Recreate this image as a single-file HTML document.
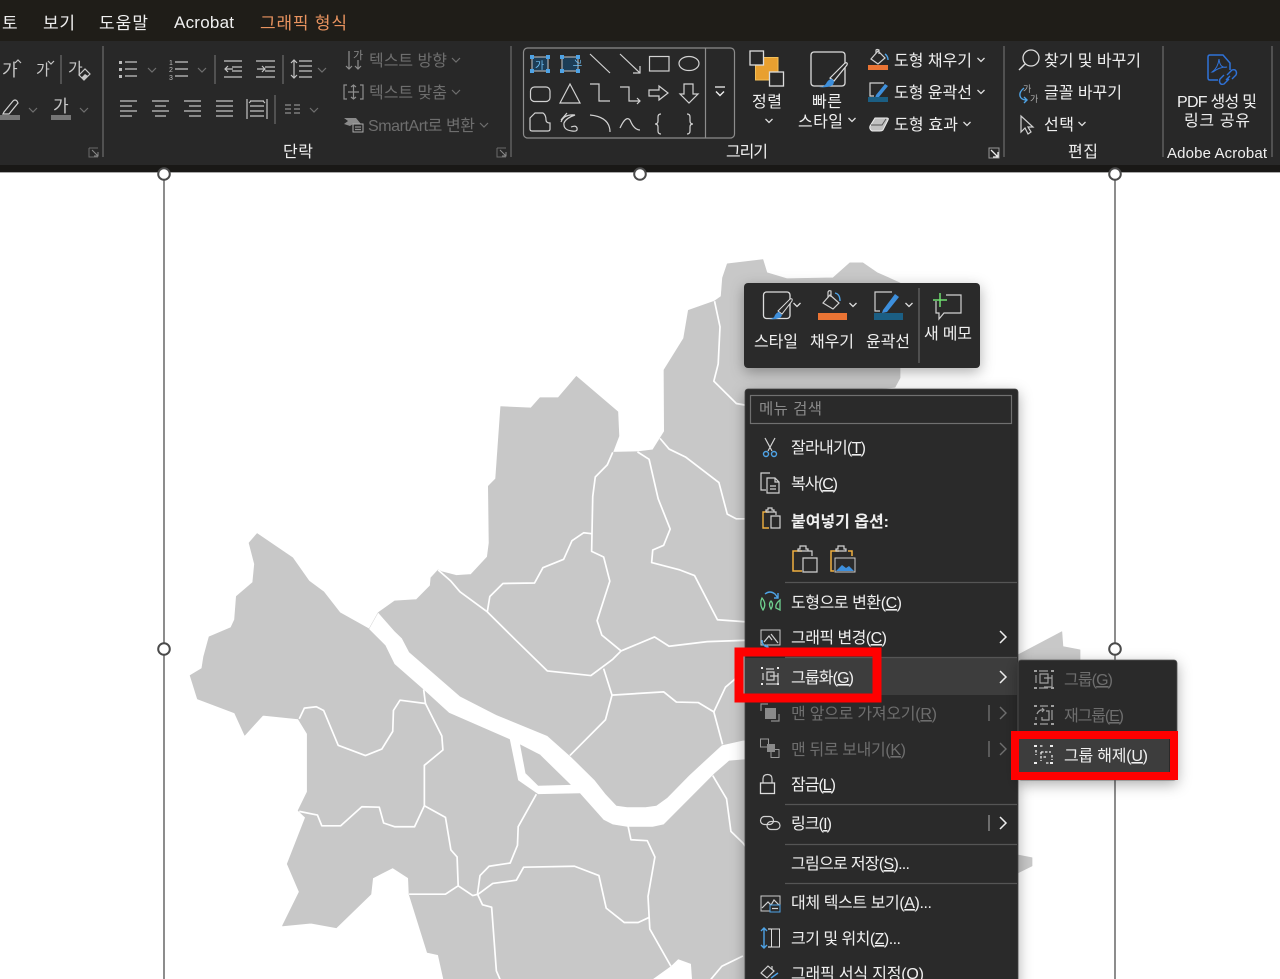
<!DOCTYPE html>
<html lang="ko"><head><meta charset="utf-8"><title>그래픽 형식</title>
<style>
html,body{margin:0;padding:0;background:#fff;width:1280px;height:979px;overflow:hidden}
svg{display:block}
text{font-family:"Liberation Sans","Noto Sans CJK KR",sans-serif;font-size:16px;fill:#f0f0f0}
.d{fill:#6b6b6b}.m{font-size:16px;fill:#f0f0f0}.g{font-size:16px;fill:#6e6e6e}
.s{fill:none;stroke:#d2d2d2;stroke-width:1.2}
.t{fill:none;stroke:#c4c4c4;stroke-width:1.2}
.dim{fill:none;stroke:#6f6f6f;stroke-width:1.2}
.mid{fill:none;stroke:#8f8f8f;stroke-width:1.2}
.b{fill:none;stroke:#4ea3e6;stroke-width:1.4}
.sep{stroke:#5f5f5f;stroke-width:1.5}
.ln{fill:none;stroke:#fff;stroke-width:1.7;vector-effect:non-scaling-stroke;stroke-linejoin:round}
</style></head><body>
<svg width="1280" height="979" viewBox="0 0 1280 979" xmlns="http://www.w3.org/2000/svg">
<defs>
<filter id="sh" x="-20%" y="-20%" width="140%" height="140%"><feDropShadow dx="0" dy="4" stdDeviation="7" flood-color="#000" flood-opacity=".32"/></filter>
<polyline id="c" points="-3.5,-2 0,1.5 3.5,-2" fill="none" stroke="#ddd" stroke-width="1.3"/>
<polyline id="cd" points="-4,-2 0,2 4,-2" fill="none" stroke="#6f6f6f" stroke-width="1.2"/>
<g id="la"><path d="M0 0h9M0 0v9h9" fill="none" stroke="#6a6a6a"/><path d="M3 2l6 6M9 4v4H5" fill="none" stroke="#8a8a8a"/></g>
</defs>

<!-- frame lines -->
<rect width="1280" height="979" fill="#fff"/>
<path d="M164 173V979M1115 173V979" stroke="#5c5c5c" stroke-width="1.4"/>

<!-- map -->
<g transform="translate(180,250) scale(.36364,.46510)">
<polygon fill="#c8c8c8" stroke="#c8c8c8" stroke-width="2" stroke-linejoin="round" points="28,915 60,900 65,875 80,832 140,812 150,795 155,745 200,715 205,675 190,630 212,610 310,662 355,712 395,735 440,780 520,815 545,780 590,755 650,752 688,722 690,705 710,688 720,692 760,700 800,698 845,660 850,630 848,508 868,492 882,337 965,340 990,318 1040,318 1090,272 1204,348 1207,400 1190,435 1258,434 1300,430 1320,405 1332,390 1331,258 1385,190 1398,130 1470,110 1488,100 1492,60 1505,30 1603,21 1614,49 1669,62 1796,60 1842,28 1878,28 1917,49 1980,71 1980,275 1966,295 1900,300 1900,800 2304,871 2425,821 2428,853 2475,860 2475,967 2200,1000 2304,1301 2343,1307 2343,1324 2304,1339 2200,1568 725,1568 710,1515 680,1510 630,1385 628,1350 585,1328 530,1350 525,1385 430,1457 360,1447 282,1453 328,1380 295,1320 345,1220 325,1205 350,1165 350,1040 325,1008 228,1000 178,1043 150,995 48,965"/>
<polygon fill="#fff" points="545,780 590,820 610,835 630,865 770,960 870,1000 1010,1045 1075,1090 1140,1140 1170,1170 1200,1195 1230,1198 1280,1198 1310,1195 1340,1178 1400,1130 1490,1065 1548,1055 1600,1052 1600,1092 1510,1098 1470,1125 1330,1235 1300,1240 1230,1240 1190,1235 1165,1225 1100,1168 985,1170 930,1140 907,1052 740,995 670,945 590,890 565,850 520,815"/>
<polygon fill="#c8c8c8" points="935,1063 990,1085 1075,1150 985,1152 950,1125"/>
<polygon fill="#fff" points="1300,1568 1350,1540 1370,1525 1405,1535 1408,1568"/>
<polyline class="ln" points="710,688 745,712 770,735 845,778 925,840 1010,905 1130,915 1190,880 1213,862"/>
<polyline class="ln" points="845,778 852,745 888,717 975,716 998,683 1055,665 1078,625 1110,608 1132,610"/>
<polyline class="ln" points="1190,435 1175,462 1142,488 1135,530 1132,648 1165,660 1182,712 1147,797 1160,828 1213,862"/>
<polyline class="ln" points="1213,862 1305,832 1345,852 1450,842 1600,838"/>
<polyline class="ln" points="1258,434 1290,450 1315,535 1348,600 1330,635 1300,645 1297,672 1375,688 1415,700 1478,795 1600,802"/>
<polyline class="ln" points="1320,405 1345,428 1390,445 1482,500 1505,568 1530,578 1600,578"/>
<polyline class="ln" points="1470,110 1485,165 1480,245 1468,282 1530,330 1600,340"/>
<polyline class="ln" points="1165,900 1188,957 1170,1010 1072,1087"/>
<polyline class="ln" points="1188,957 1330,950 1365,972 1425,973 1468,993 1500,940 1530,920"/>
<polyline class="ln" points="1468,993 1492,1063"/>
<polyline class="ln" points="670,945 675,975 605,968 587,990 585,1035 555,1073 510,1087 435,1065 395,990 375,982 342,985 328,1008"/>
<polyline class="ln" points="675,975 720,1045 723,1075 672,1108 672,1195 645,1240 590,1240 560,1232 548,1198 500,1197 442,1238 390,1238 378,1215 328,1207"/>
<polyline class="ln" points="672,1195 730,1220 745,1290 762,1305 765,1367 730,1385 630,1385"/>
<polyline class="ln" points="765,1367 805,1388 820,1385 860,1362 925,1355 945,1327 1085,1325 1152,1345 1172,1415 1222,1446 1260,1446 1290,1435"/>
<polyline class="ln" points="818,1385 825,1345 850,1325 908,1318 928,1280 930,1240 980,1170"/>
<polyline class="ln" points="818,1385 832,1408 857,1413 870,1550 880,1568"/>
<polyline class="ln" points="1232,1238 1240,1268 1285,1270 1306,1305 1287,1390 1292,1460 1350,1540"/>
<polyline class="ln" points="1465,1130 1503,1180 1515,1250 1548,1275 1600,1330"/>
<polyline class="ln" points="1460,1568 1490,1540 1548,1518"/>
</g>

<!-- title + ribbon -->
<rect width="1280" height="41" fill="#1f1d18"/>
<rect y="41" width="1280" height="124" fill="#282828"/>
<rect y="165" width="1280" height="7" fill="#191816"/>
<rect y="172" width="1280" height="1" fill="#aaa"/>
<text x="2" y="29" style="font-size:17px">토</text>
<text x="43" y="29" style="font-size:17px" textLength="32">보기</text>
<text x="99" y="29" style="font-size:17px" textLength="49">도움말</text>
<text x="174" y="28" style="font-size:17px" textLength="60">Acrobat</text>
<text x="260" y="29" style="font-size:17px;fill:#e8935f" textLength="87">그래픽 형식</text>

<!-- handles -->
<g fill="#fff" stroke="#4a4a4a" stroke-width="2">
<circle cx="164" cy="174" r="5.800"/><circle cx="640" cy="174" r="5.800"/><circle cx="1115" cy="174" r="5.800"/>
<circle cx="164" cy="649" r="5.800"/><circle cx="1115" cy="649" r="5.800"/>
</g>

<!-- group separators -->
<path class="sep" d="M103 46V157M511 46V157M1004 46V157M1163 46V157M1272 46V157"/>
<path class="sep" d="M61 55V84M215 55V84M283 55V84M275 95V124"/>
<use href="#la" x="89" y="148"/><use href="#la" x="497" y="148"/>
<g><path d="M989 148h10v10h-10z" fill="none" stroke="#999"/><path d="M991 150l7 7M998 152v5h-5" fill="none" stroke="#eee" stroke-width="1.3"/></g>

<!-- font cluster -->
<text x="2" y="76" style="font-size:17px;fill:#c8c8c8">가</text><path class="t" d="M15 63l3-3 3 3"/>
<text x="36" y="75" style="font-size:15px;fill:#c8c8c8">가</text><path class="t" d="M48 61l3 3 3-3"/>
<text x="68" y="74" style="font-size:16px;fill:#c8c8c8">가</text>
<path d="M79 75l6-6 5 5-6 6z" fill="none" stroke="#c8c8c8" stroke-width="1.200"/><path d="M81.500 77.500l3.500-3.500 3 2-3.500 3.500z" fill="#c8c8c8"/>
<path class="s" d="M4 112l9-11q2-2 4 0l1 2-9 11H3z"/><rect y="115" width="20" height="5" fill="#767676"/><use href="#cd" x="33" y="110"/>
<text x="53" y="112" style="font-size:17px;fill:#c8c8c8">가</text><rect x="51" y="115" width="20" height="5" fill="#767676"/><use href="#cd" x="84" y="110"/>

<!-- paragraph -->
<g class="t">
<path d="M125 62h12M125 69h12M125 76h12"/>
<path d="M175 62h13M175 69h13M175 76h13"/>
<path d="M224 61h18M232 67h10M232 71h10M224 77h18M233 69h-8M228 66l-3 3 3 3"/>
<path d="M256 61h19M265 67h10M265 71h10M256 77h19M257 69h8M262 66l3 3-3 3"/>
<path d="M299 61h13M299 66h13M299 71h13M299 77h13M294 60v18M291 63l3-3 3 3M291 75l3 3 3-3"/>
<path d="M120 101h17M120 106h12M120 111h17M120 116h12"/>
<path d="M152 101h17M155 106h11M152 111h17M155 116h11"/>
<path d="M184 101h17M189 106h12M184 111h17M189 116h12"/>
<path d="M216 101h17M216 106h17M216 111h17M216 116h17"/>
<path d="M247 99v20M267 99v20M250 106h14M250 111h14M250 116h14M250 101h14M251 101l-2 2M263 101l2 2"/>
</g>
<g fill="#bbb"><rect x="119" y="61" width="3" height="3"/><rect x="119" y="68" width="3" height="3"/><rect x="119" y="75" width="3" height="3"/></g>
<text x="169" y="65" style="font-size:7px;fill:#bbb">1</text><text x="169" y="72" style="font-size:7px;fill:#bbb">2</text><text x="169" y="80" style="font-size:7px;fill:#bbb">3</text>
<use href="#cd" x="152" y="70"/><use href="#cd" x="202" y="70"/><use href="#cd" x="322" y="70"/><use href="#cd" x="314" y="110"/>
<path class="mid" d="M285 105h6M294 105h6M285 109h6M294 109h6M285 113h6M294 113h6"/>

<!-- disabled text tools -->
<path class="mid" d="M349 51v18M346 66l3 3 3-3M358 60v9M355 66l3 3 3-3"/>
<text x="353" y="59" style="font-size:11px;fill:#8a8a8a">가</text>
<path class="mid" d="M347 85h-3v14h3M360 85h3v14h-3M348 92h11M353.500 85v14M351 87l2.500-2 2.500 2M351 97l2.500 2 2.500-2"/>
<path d="M344 118h12l5 6h-8l-3 2-6-2 4-3z" fill="#8a8a8a"/><rect x="353" y="124" width="10" height="8" fill="#282828" stroke="#aaa"/><path class="mid" d="M355 127h6M355 129.500h6"/>
<text class="g" x="369" y="66" textLength="78">텍스트 방향</text><use href="#cd" x="456" y="60"/>
<text class="g" x="369" y="98" textLength="78">텍스트 맞춤</text><use href="#cd" x="456" y="92"/>
<text class="g" x="368" y="131" textLength="107">SmartArt로 변환</text><use href="#cd" x="484" y="125"/>
<text x="283" y="157" textLength="30">단락</text>

<!-- shape gallery -->
<rect x="523.500" y="48" width="211" height="90" rx="4" fill="none" stroke="#8c8c8c" stroke-width="1.2"/>
<path d="M705.500 48V138" stroke="#8c8c8c" stroke-width="1.2"/>
<path d="M715 87h10" stroke="#eee" stroke-width="1.300"/><path d="M716 91.500l4 4 4-4" fill="none" stroke="#eee" stroke-width="1.400"/>
<rect x="532" y="57" width="16" height="14" fill="#1c3d57" stroke="#c8c8c8"/><text x="535" y="69" style="font-size:10px;fill:#6fc0f5">가</text>
<rect x="562" y="57" width="16" height="14" fill="#1c3d57" stroke="#c8c8c8"/><text transform="translate(574,59) rotate(90)" style="font-size:9px;fill:#6fc0f5">가</text>
<g fill="#4ea3e6"><rect x="530" y="55" width="4" height="4"/><rect x="546" y="55" width="4" height="4"/><rect x="530" y="69" width="4" height="4"/><rect x="546" y="69" width="4" height="4"/><rect x="560" y="55" width="4" height="4"/><rect x="576" y="55" width="4" height="4"/><rect x="560" y="69" width="4" height="4"/><rect x="576" y="69" width="4" height="4"/></g>
<g class="s">
<path d="M590 54l20 19"/><path d="M620 54l20 19M633 73h7v-7"/>
<rect x="649.500" y="56.500" width="19.500" height="14.500"/><ellipse cx="689" cy="63.500" rx="10" ry="7"/>
<rect x="530.500" y="87" width="19.500" height="14.500" rx="4"/><path d="M560 103l10-19 10 19z"/>
<path d="M590 84h9v17h11"/><path d="M620 87h9v14h11M637 98l3 3-3 3"/>
<path d="M649 90h10v-4l9 7-9 7v-4h-10z"/><path d="M684 84h9v10h5l-9 9-9-9h4z"/>
<path d="M532 131q-2 0-2-2v-11l5-5h8q3 2 3 7 0 3 4 3v6q0 2-2 2z"/>
<path d="M561 122q3-8 14-7-9 3-11 8-1 7 8 8 6 1 5-3-1-3-6-1M561 120l6-7"/>
<path d="M590 115q20 2 20 17"/><path d="M620 128q6-13 10-8 4 10 10 10"/>
<path d="M661 114q-3 0-3 3v4q0 3-3 3 3 0 3 3v4q0 3 3 3"/><path d="M687 114q3 0 3 3v4q0 3 3 3-3 0-3 3v4q0 3-3 3"/>
</g>
<text x="726" y="157" textLength="42">그리기</text>

<!-- arrange -->
<rect x="755.500" y="57.500" width="22.500" height="22.500" fill="#e8a030" stroke="#f3c05a"/>
<rect x="750" y="51" width="13.500" height="14" fill="#282828" stroke="#ddd" stroke-width="1.3"/>
<rect x="769.500" y="72" width="14" height="14" fill="#282828" stroke="#ddd" stroke-width="1.3"/>
<text x="752" y="107" textLength="30">정렬</text><use href="#c" x="769" y="121"/>
<!-- quick style -->
<rect x="811" y="52" width="34" height="34" rx="3" fill="none" stroke="#ddd" stroke-width="1.3"/>
<path d="M830 78l15-15q3-1 2 2l-13 16z" fill="#282828" stroke="#ddd" stroke-width="1.2"/>
<path d="M819 87q6 0 8-5 2-3 5-3l2 2q0 4-3 5-6 2-12 1z" fill="#3d8fdc"/>
<text x="812" y="107" textLength="30">빠른</text>
<text x="798" y="127" textLength="45">스타일</text><use href="#c" x="852" y="120"/>
<!-- fill/outline/effect -->
<path class="s" d="M871 59l7-8 7 7-7 6zM876 53v-3q1-1 3 0v4"/><path class="b" d="M885 54q3 2 3 6"/>
<rect x="868" y="65" width="20" height="5" fill="#ea7434"/>
<path class="s" d="M884 83h-14v13h4"/><path d="M876 95l9-11 3 2-9 11-4 1z" fill="#3d8fdc"/>
<rect x="868" y="97" width="20" height="5" fill="#1b5e83"/>
<path d="M870 126l5-8h12q2 0 1 2l-5 10q-1 1-3 1h-8q-3-2-2-5z" fill="#c0c0c0" stroke="#eee"/><path d="M871 125h11l4-6" fill="none" stroke="#555"/>
<text x="894" y="66" textLength="78">도형 채우기</text><use href="#c" x="981" y="60"/>
<text x="894" y="98" textLength="78">도형 윤곽선</text><use href="#c" x="981" y="92"/>
<text x="894" y="130" textLength="64">도형 효과</text><use href="#c" x="967" y="124"/>
<!-- editing -->
<circle cx="1031" cy="58" r="8" fill="none" stroke="#ddd" stroke-width="1.3"/><path d="M1025 64l-6 6" stroke="#ddd" stroke-width="1.4"/>
<text x="1044" y="66" textLength="97">찾기 및 바꾸기</text>
<text x="1023" y="92" style="font-size:9px;fill:#aaa">가</text><text x="1030" y="102" style="font-size:9px;fill:#aaa">가</text>
<path class="b" d="M1024 88q-5 4-4 8 1 4 7 4M1024 97l3 3-3 3"/>
<text x="1044" y="98" textLength="78">글꼴 바꾸기</text>
<path class="s" d="M1021 116v16l4-4 3 6 3-2-3-5h5z"/>
<text x="1044" y="130" textLength="30">선택</text><use href="#c" x="1082" y="124"/>
<text x="1083" y="157" text-anchor="middle" textLength="30">편집</text>
<!-- pdf -->
<path d="M1218 80h-8q-2 0-2-2V57q0-2 2-2h13l7 8v7" fill="none" stroke="#2f72d8" stroke-width="1.5"/>
<path d="M1212 72q6-4 7-13 1 10 8 8-8 0-14 5z" fill="none" stroke="#2f72d8"/>
<path d="M1227 75l5-5q3-1 4 1t0 4l-4 4M1229 79l-5 5q-3 1-4-1t0-4l4-4M1226 80l4-4" fill="none" stroke="#2f72d8" stroke-width="1.4"/>
<text x="1217" y="107" text-anchor="middle" textLength="80">PDF 생성 및</text>
<text x="1217" y="126" text-anchor="middle" textLength="66">링크 공유</text>
<text x="1167" y="158" style="font-size:15px" textLength="100">Adobe Acrobat</text>

<!-- mini toolbar -->
<rect x="744" y="283" width="236" height="85" rx="4" fill="#2b2b2b" filter="url(#sh)"/>
<path d="M919 288V363" stroke="#5f5f5f" stroke-width="1.4"/>
<rect x="763.500" y="292" width="26.500" height="26.500" rx="3" fill="none" stroke="#ddd" stroke-width="1.3"/>
<path d="M778 311l12-12q3-1 2 2l-10 13z" fill="#2b2b2b" stroke="#ddd"/><path d="M769 319q5 0 6-4 2-3 4-3l3 3q-1 3-3 3-5 2-10 1z" fill="#3d8fdc"/>
<use href="#c" x="797" y="305"/>
<path class="s" d="M823 303l7-8 9 8-6 6zM828 297v-5q1-2 3-1v6"/><path d="M835 293q5 1 5 8" class="b"/>
<rect x="818" y="313" width="29" height="7" fill="#ea7434"/><use href="#c" x="853" y="305"/>
<path class="s" d="M892 292h-17v19h5"/><path d="M883 310l12-16 4 3-12 15-5 1z" fill="#3d8fdc"/>
<rect x="874" y="313" width="29" height="7" fill="#1b5e83"/><use href="#c" x="909" y="305"/>
<path class="s" d="M946 295h15v18h-17l-5 6v-6h-3v-12"/><path d="M940 293v14M933 300h14" stroke="#6fe06f" stroke-width="1.5"/>
<text x="754" y="347" textLength="44">스타일</text><text x="810" y="347" textLength="44">채우기</text><text x="866" y="347" textLength="44">윤곽선</text>
<text x="924" y="339" textLength="48">새 메모</text>

<!-- context menu -->
<rect x="745" y="389" width="273" height="600" rx="3" fill="#2b2b2b" stroke="#444" stroke-width=".8" filter="url(#sh)"/>
<rect x="750.500" y="395.500" width="261" height="28" fill="none" stroke="#707070" stroke-width="1.2"/>
<text x="759" y="414" style="font-size:15.500px;fill:#8a8a8a" textLength="63">메뉴 검색</text>
<rect x="745" y="658" width="272" height="37" fill="#3d3d3d"/>
<path d="M785 582.500H1017M785 657.500H1017M785 804.500H1017M785 844.500H1017M785 883.500H1017" stroke="#555" stroke-width="1.2"/>

<g>
<text class="m" x="791" y="453" textLength="75">잘라내기(<tspan text-decoration="underline">T</tspan>)</text>
<text class="m" x="791" y="489" textLength="47">복사(<tspan text-decoration="underline">C</tspan>)</text>
<text class="m" x="791" y="527" style="font-weight:bold" textLength="98">붙여넣기 옵션:</text>
<text class="m" x="791" y="608" textLength="111">도형으로 변환(<tspan text-decoration="underline">C</tspan>)</text>
<text class="m" x="791" y="643" textLength="96">그래픽 변경(<tspan text-decoration="underline">C</tspan>)</text>
<text class="m" x="791" y="683" textLength="63">그룹화(<tspan text-decoration="underline">G</tspan>)</text>
<text class="g" x="791" y="719" textLength="146">맨 앞으로 가져오기(<tspan text-decoration="underline">R</tspan>)</text>
<text class="g" x="791" y="755" textLength="115">맨 뒤로 보내기(<tspan text-decoration="underline">K</tspan>)</text>
<text class="m" x="791" y="790" textLength="45">잠금(<tspan text-decoration="underline">L</tspan>)</text>
<text class="m" x="791" y="829" textLength="41">링크(<tspan text-decoration="underline">I</tspan>)</text>
<text class="m" x="791" y="869" textLength="119">그림으로 저장(<tspan text-decoration="underline">S</tspan>)...</text>
<text class="m" x="791" y="908" textLength="141">대체 텍스트 보기(<tspan text-decoration="underline">A</tspan>)...</text>
<text class="m" x="791" y="944" textLength="110">크기 및 위치(<tspan text-decoration="underline">Z</tspan>)...</text>
<text class="m" x="791" y="979" textLength="133">그래픽 서식 지정(<tspan text-decoration="underline">O</tspan>)</text>
</g>
<!-- chevrons in menu -->
<path d="M1000 631l6 6-6 6M1000 671l6 6-6 6M1000 817l6 6-6 6" fill="none" stroke="#eee" stroke-width="1.5"/>
<path d="M1000 707l6 6-6 6M1000 743l6 6-6 6" fill="none" stroke="#6f6f6f" stroke-width="1.4"/>
<path d="M989 705v16M989 741v16" stroke="#6f6f6f" stroke-width="1.4"/><path d="M989 815v16" stroke="#8a8a8a" stroke-width="1.4"/>

<!-- menu icons -->
<path class="s" d="M765 438l7 13M775 438l-7 13"/><circle class="b" cx="766" cy="454" r="2.500"/><circle class="b" cx="774" cy="454" r="2.500"/>
<path class="s" d="M770 473h-9v17h5M767 478h8l4 4v11h-12zM775 478v4h4M770 486h6M770 489h6"/>
<path d="M769 512h-6v16h6" fill="none" stroke="#f0b040" stroke-width="1.4"/><path class="s" d="M766 512v-2h2v-2h4v2h2v2h-8M773 512h3v3M771 516h9v12h-9z"/>
<path d="M802 551h-9v20h9" fill="none" stroke="#f0b040" stroke-width="1.5"/><path class="s" d="M798 551v-2h2v-3h6v3h2v2zM808 551h4v5M803 558h14v14h-14z"/>
<path d="M839 551h-8v20h3" fill="none" stroke="#f0b040" stroke-width="1.5"/><path d="M848 551h4v5" fill="none" stroke="#f0b040" stroke-width="1.5"/><path class="s" d="M836 551v-2h2v-3h6v3h2v2z"/>
<rect x="835" y="558" width="20" height="14" fill="#2b2b2b" stroke="#ccc"/><path d="M836 571l6-6 4 3 3-2 5 5z" fill="#3d8fdc"/>
<!-- convert -->
<path d="M762 598q-3 6 1 12 4-6-1-12zM780 600q-5 4-4 8l4 2zM771 601q-3 3 0 8 3-5 0-8z" fill="none" stroke="#6fd08f" stroke-width="1.3"/><path class="b" d="M765 594q5-4 10 0l3 4M778 593v5h-4"/>
<!-- change graphic -->
<rect x="761" y="630" width="19" height="15" fill="none" stroke="#ccc"/><path class="s" d="M764 642l5-6 3 4M771 634l7 9"/><path class="b" d="M762 640q0 6 6 7M766 645l2 2-2 2"/>
<!-- group -->
<path d="M761 668h2M777 668h2M761 684h2M777 684h2" stroke="#eee" stroke-width="2"/>
<path class="s" d="M763 673v7M778 673v7M766 669h8M766 684h8M767 672h7v8h-7zM770 676h8v8h-8"/>
<!-- front/back -->
<path class="mid" d="M761 711v-7h7M771 721h8v-7"/><rect x="765" y="708" width="11" height="11" fill="#8a8a8a"/>
<rect x="760.500" y="739" width="8" height="8" fill="none" stroke="#9a9a9a"/><rect x="771" y="749.500" width="8" height="8" fill="none" stroke="#9a9a9a"/><rect x="767" y="744" width="8" height="8" fill="#8a8a8a"/>
<!-- lock -->
<rect x="760.500" y="783" width="14" height="10.500" fill="none" stroke="#ddd" stroke-width="1.3"/><path class="s" d="M763 783v-4q0-4.500 4.500-4.500t4.500 4.500v4"/>
<!-- link -->
<rect x="760.500" y="816.500" width="13" height="8" rx="4" class="s"/><rect x="767" y="821.500" width="13" height="8" rx="4" class="s"/>
<!-- alt text -->
<rect x="761" y="896" width="19" height="15" fill="none" stroke="#ccc"/><path class="s" d="M762 908l6-6 3 3 3-5 5 5"/><rect x="770" y="905" width="10" height="7" fill="#2b2b2b" stroke="#4ea3e6"/><path class="s" d="M772 908.500h6"/>
<!-- size -->
<path class="b" d="M764 928v20M761 931l3-3 3 3M761 945l3 3 3-3"/><path class="s" d="M771 929h-3M771 947h-3"/><rect x="771.500" y="929" width="8" height="18" fill="none" stroke="#ddd"/>
<!-- format -->
<path class="s" d="M761 973l7-7 6 5-7 7zM772 966v3"/><path class="b" d="M771 978l7-5"/>

<!-- submenu -->
<rect x="1018" y="660" width="159" height="120" rx="3" fill="#2b2b2b" stroke="#555" stroke-width=".8" filter="url(#sh)"/>
<rect x="1019" y="738" width="150" height="34" fill="#3d3d3d"/>
<g stroke="#a0a0a0" fill="none" stroke-width="1.2">
<path d="M1034 671h3M1051 671h3M1034 688h3M1051 688h3" stroke-width="2"/>
<path d="M1036 675v8M1052 675v8M1039 671h9M1039 688h9M1040 674h8v9h-8zM1044 678h8v9h-8"/>
<path d="M1034 706h3M1051 706h3M1034 724h3M1051 724h3" stroke-width="2"/>
<path d="M1036 717v3M1052 710v10M1040 706h8M1040 724h8M1037 714q2-5 7-4M1042 708l2 2-2 2M1046 711h3v9h-7v-3"/>
</g>
<g stroke="#eee" fill="none" stroke-width="1.3">
<path d="M1034 746h3M1050 746h3M1034 763h3M1050 763h3" stroke-width="2"/>
<path d="M1036 750v5M1052 755v5M1040 746h3M1046 763h3M1041 752h10M1041 752v9M1046 757h-3" stroke-dasharray="2.500 1.500"/>
</g>
<text class="g" x="1064" y="685" textLength="49">그룹(<tspan text-decoration="underline">G</tspan>)</text>
<text class="g" x="1064" y="721" textLength="60">재그룹(<tspan text-decoration="underline">E</tspan>)</text>
<text class="m" x="1064" y="761" textLength="84">그룹 해제(<tspan text-decoration="underline">U</tspan>)</text>

<!-- red highlight boxes -->
<rect x="739" y="652" width="138" height="46" fill="none" stroke="#f00" stroke-width="9"/>
<rect x="1015" y="735" width="159" height="41" fill="none" stroke="#f00" stroke-width="8"/>
</svg>
</body></html>
